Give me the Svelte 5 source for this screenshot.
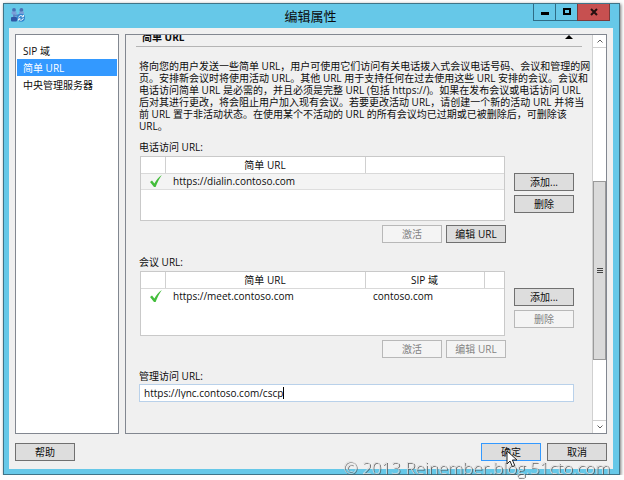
<script lang="ts">
	type Group = {
		id: string
		label: string
		columns: string[]
		rows: string[][]
		selected: boolean
		canRemove: boolean
		canEdit: boolean
	}

	const pages = ['SIP 域', '简单 URL', '中央管理服务器']
	let current = $state(1)
	let adminUrl = $state('https://lync.contoso.com/cscp')

	const description = [
		'将向您的用户发送一些简单 URL，用户可使用它们访问有关电话拨入式会议电话号码、会议和管理的网',
		'页。安排新会议时将使用活动 URL。其他 URL 用于支持任何在过去使用这些 URL 安排的会议。会议和',
		'电话访问简单 URL 是必需的，并且必须是完整 URL (包括 https://)。如果在发布会议或电话访问 URL',
		'后对其进行更改，将会阻止用户加入现有会议。若要更改活动 URL，请创建一个新的活动 URL 并将当',
		'前 URL 置于非活动状态。在使用某个不活动的 URL 的所有会议均已过期或已被删除后，可删除该',
		'URL。'
	]

	const groups: Group[] = [
		{
			id: 'dialin',
			label: '电话访问 URL:',
			columns: ['简单 URL', ''],
			rows: [['https://dialin.contoso.com', '']],
			selected: true,
			canRemove: true,
			canEdit: true
		},
		{
			id: 'meet',
			label: '会议 URL:',
			columns: ['简单 URL', 'SIP 域', ''],
			rows: [['https://meet.contoso.com', 'contoso.com', '']],
			selected: false,
			canRemove: false,
			canEdit: false
		}
	]
</script>

<div class="window">
	<header class="titlebar">
		<svg class="app-icon" viewBox="0 0 14 14" aria-hidden="true">
			<path d="M3 4v7M3 7.5h7M10 3v5" stroke="#5f86c4" stroke-width="2" fill="none" />
			<circle cx="3" cy="2" r="1.9" fill="#4a70b4" />
			<rect x="0.5" y="3.4" width="5" height="3.2" rx="1" fill="#7c9fd8" />
			<circle cx="10.4" cy="2" r="1.9" fill="#4a70b4" />
			<rect x="8" y="3.4" width="5" height="3.2" rx="1" fill="#7c9fd8" />
			<rect x="0" y="9" width="6" height="4.6" rx="1" fill="#2f58a6" />
			<circle cx="10" cy="9.8" r="4" fill="#3285cf" />
			<path
				d="M7.7 9.5a2.4 2.4 0 0 1 4-1.3M12.3 10.2a2.4 2.4 0 0 1-4 1.3M12.4 7v1.8h-1.8M7.6 12.6v-1.8h1.8"
				stroke="#fff"
				fill="none"
			/>
		</svg>
		<h1>编辑属性</h1>
		<div class="caption">
			<button aria-label="最小化"><svg viewBox="0 0 10 10"><path d="M1 5h8v3H1z" /></svg></button>
			<button aria-label="最大化">
				<svg viewBox="0 0 10 10"><path d="M1 1h8v7H1zM3 3v3h4V3z" fill-rule="evenodd" /></svg>
			</button>
			<button class="close" aria-label="关闭">
				<svg viewBox="0 0 10 10"><path d="M2 2l6 6M8 2l-6 6" stroke="#241010" stroke-width="2" /></svg>
			</button>
		</div>
	</header>

	<div class="client">
		<div class="body">
			<nav class="pages">
				{#each pages as page, i}
					<button class:active={i === current} onclick={() => (current = i)}>{page}</button>
				{/each}
			</nav>

			<main class="panel">
				<div class="content">
					<div class="section">
						<h2>简单 URL</h2>
						<svg viewBox="0 0 8 4" aria-hidden="true"><path d="M0 4L4 0l4 4z" /></svg>
					</div>

					<p class="description">
						{#each description as line}
							<span>{line}</span>
						{/each}
					</p>

					{#each groups as group}
						<section class="group">
							<h3 id={group.id}>{group.label}</h3>
							<div class="row">
								<div class="list">
									<table aria-labelledby={group.id}>
										<thead>
											<tr>
												<th class="state"></th>
												{#each group.columns as column, i}
													<th class:url={i === 0} class:filler={i === 2}>{column}</th>
												{/each}
											</tr>
										</thead>
										<tbody>
											{#each group.rows as cells}
												<tr class:selected={group.selected}>
													<td class="state">
														<svg viewBox="0 0 12 12" role="img" aria-label="活动">
															<path d="M0 7L2 5.6 4.4 8.6C6.4 5 8.6 2 11.8 0 9.4 3.6 7.4 7.4 5.6 12H4z" fill="#43bd3b" />
														</svg>
													</td>
													{#each cells as cell}
														<td>{cell}</td>
													{/each}
												</tr>
											{/each}
										</tbody>
									</table>
								</div>
								<div class="side">
									<button class="btn">添加...</button>
									<button class="btn" disabled={!group.canRemove}>删除</button>
								</div>
							</div>
							<div class="actions">
								<button class="btn" disabled>激活</button>
								<button class="btn" disabled={!group.canEdit}>编辑 URL</button>
							</div>
						</section>
					{/each}

					<div class="field">
						<label for="admin-url">管理访问 URL:</label>
						<div class="textbox">
							<input id="admin-url" type="text" bind:value={adminUrl} />
							<i class="caret"></i>
						</div>
					</div>
				</div>

				<div class="scrollbar" aria-hidden="true">
					<span class="arrow"><svg viewBox="0 0 6 4"><path d="M0.5 3.5L3 1l2.5 2.5" /></svg></span>
					<div class="track">
						<div class="thumb"><i></i><i></i><i></i></div>
					</div>
					<span class="arrow down"><svg viewBox="0 0 6 4"><path d="M0.5 0.5L3 3 5.5 0.5" /></svg></span>
				</div>
			</main>
		</div>

		<footer>
			<button class="btn">帮助</button>
			<span class="spacer"></span>
			<button class="btn default">
				确定
				<svg class="pointer" viewBox="0 0 12 18" aria-hidden="true">
					<path d="M1 1v13l3-3 2.4 5.6 2.4-1L6.4 10H11z" fill="#fff" stroke="#222" />
				</svg>
			</button>
			<button class="btn">取消</button>
		</footer>
	</div>
</div>
<div class="watermark">© 2013 Reinember.blog.51cto.com</div>

<style>
	:global(body) {
		overflow: hidden;
		background: #fdfdfd;
	}

	* {
		box-sizing: border-box;
	}

	.window {
		display: flex;
		flex-direction: column;
		height: calc(100vh - 8px);
		margin: 3px 4px 0 3px;
		border: 1px solid #3f7488;
		background: #66c8e8;
		box-shadow: 1px 1px 3px #777;
		font-family: 'Open Sans', 'Noto Sans CJK SC', sans-serif;
		font-size: 10px;
		line-height: 12px;
		color: #0c0c0c;
	}

	button,
	input {
		font: inherit;
		color: inherit;
	}

	h1,
	h2,
	h3,
	p {
		margin: 0;
	}

	svg {
		display: block;
	}

	.titlebar {
		display: grid;
		grid-template-columns: 1fr auto 1fr;
		height: 24px;
		padding: 0 9px 0 7px;
	}

	.app-icon {
		width: 14px;
		height: 14px;
		margin-top: 4px;
	}

	h1 {
		font-size: 13px;
		font-weight: 400;
		line-height: 24px;
	}

	.caption {
		display: flex;
		justify-content: flex-end;
	}

	.caption button {
		display: flex;
		align-items: center;
		justify-content: center;
		width: 22px;
		height: 17px;
		padding: 0;
		border: 1px solid #2f6c86;
		border-width: 0 0 1px 1px;
		background: none;
	}

	.caption .close {
		width: 33px;
		border-color: #7c3a3a;
		border-right-width: 1px;
		background: #c75050;
	}

	.caption svg {
		width: 10px;
		height: 10px;
	}

	.client {
		display: flex;
		flex: 1;
		flex-direction: column;
		min-height: 0;
		margin: 0 6px 5px 5px;
		padding: 6px 6px 8px;
		background: #f0f0f0;
	}

	.body {
		display: flex;
		flex: 1;
		gap: 6px;
		min-height: 0;
	}

	.pages {
		display: flex;
		flex-direction: column;
		width: 104px;
		padding: 7px 1px;
		border: 1px solid #828790;
		background: #fff;
	}

	.pages button {
		height: 17px;
		padding: 0 6px;
		border: 0;
		background: none;
		text-align: left;
	}

	.pages .active {
		background: #3399ff;
		color: #fff;
	}

	.panel {
		display: flex;
		flex: 1;
		min-width: 0;
		overflow: hidden;
		border: 1px solid #828790;
	}

	.content {
		flex: 1;
		min-width: 0;
		margin-top: -4px;
		padding: 0 18px 0 13px;
	}

	.section {
		display: flex;
		align-items: center;
		justify-content: space-between;
		height: 16px;
		margin: 0 -8px 0 -3px;
		padding: 0 9px 3px 6px;
		border-bottom: 1px solid #b4b4b4;
	}

	h2 {
		font-size: 10px;
		font-weight: 700;
	}

	.section svg {
		width: 8px;
		height: 4px;
	}

	.description {
		margin-top: 13px;
		white-space: nowrap;
	}

	.description span {
		display: block;
	}

	.group {
		margin-top: 9px;
	}

	.group + .group {
		margin-top: 13px;
	}

	h3 {
		font-size: 10px;
		font-weight: 400;
	}

	.row {
		display: flex;
		gap: 9px;
		margin-top: 3px;
	}

	.list {
		flex: 1;
		height: 65px;
		margin-left: 1px;
		border: 1px solid #c9c9c9;
		background: #fff;
	}

	table {
		width: 100%;
		border-collapse: collapse;
		table-layout: fixed;
	}

	th {
		height: 16px;
		padding: 0;
		border-right: 1px solid #d0d0d0;
		border-bottom: 1px solid #d9d9d9;
		font-weight: 400;
	}

	th:last-child {
		border-right: 0;
	}

	th.state {
		width: 24px;
	}

	th.url {
		width: 200px;
	}

	th.filler {
		width: 20px;
	}

	td {
		height: 16px;
		padding: 0 8px;
	}

	.selected td {
		border-bottom: 1px solid #dedede;
		background: #f4f4f4;
	}

	td.state {
		padding: 0 0 0 9px;
	}

	td svg {
		width: 12px;
		height: 12px;
	}

	.side {
		display: flex;
		flex-direction: column;
		gap: 4px;
		padding-top: 17px;
	}

	.actions {
		display: flex;
		justify-content: flex-end;
		gap: 4px;
		margin-top: 4px;
		padding-right: 68px;
	}

	.btn {
		position: relative;
		width: 60px;
		height: 18px;
		padding: 0;
		border: 1px solid #707070;
		background: #dddddd;
	}

	.btn:disabled {
		border-color: #b8b8b8;
		background: #f4f4f4;
		color: #838383;
	}

	.btn.default {
		border-color: #3399ff;
	}

	.field {
		margin-top: 12px;
	}

	.field label {
		display: block;
	}

	.textbox {
		display: flex;
		align-items: center;
		height: 18px;
		margin-top: 2px;
		padding-left: 4px;
		border: 1px solid #b9d1ea;
		background: #fff;
	}

	.textbox input {
		field-sizing: content;
		padding: 0;
		border: 0;
		outline: 0;
		background: none;
	}

	.caret {
		width: 1px;
		height: 12px;
		background: #000;
	}

	.scrollbar {
		display: flex;
		flex-direction: column;
		width: 14px;
		border-left: 1px solid #d0d0d0;
		background: #fff;
	}

	.arrow {
		display: flex;
		align-items: center;
		justify-content: center;
		height: 13px;
		border-bottom: 1px solid #d0d0d0;
	}

	.arrow.down {
		border-top: 1px solid #d0d0d0;
		border-bottom: 0;
	}

	.arrow svg {
		width: 6px;
		height: 4px;
		fill: none;
		stroke: #606060;
	}

	.track {
		flex: 1;
		display: flex;
		flex-direction: column;
	}

	.track::before {
		content: '';
		flex: 134;
	}

	.track::after {
		content: '';
		flex: 60;
	}

	.thumb {
		display: flex;
		flex: 178;
		flex-direction: column;
		align-items: center;
		justify-content: center;
		gap: 1px;
		border: 1px solid #9a9a9a;
		background: #dadada;
	}

	.thumb i {
		width: 6px;
		height: 1px;
		background: #444;
	}

	footer {
		display: flex;
		gap: 6px;
		margin-top: 9px;
	}

	.spacer {
		flex: 1;
	}

	.pointer {
		position: absolute;
		top: 6px;
		left: 24px;
		width: 12px;
		height: 18px;
		z-index: 2;
	}

	.watermark {
		position: fixed;
		right: 14px;
		bottom: 2px;
		font-family: 'Open Sans', sans-serif;
		font-size: 17px;
		font-weight: 300;
		line-height: 20px;
		color: #dcdcdc;
		text-shadow: 1px 1px 0 #555;
		opacity: 0.9;
		pointer-events: none;
	}
</style>
